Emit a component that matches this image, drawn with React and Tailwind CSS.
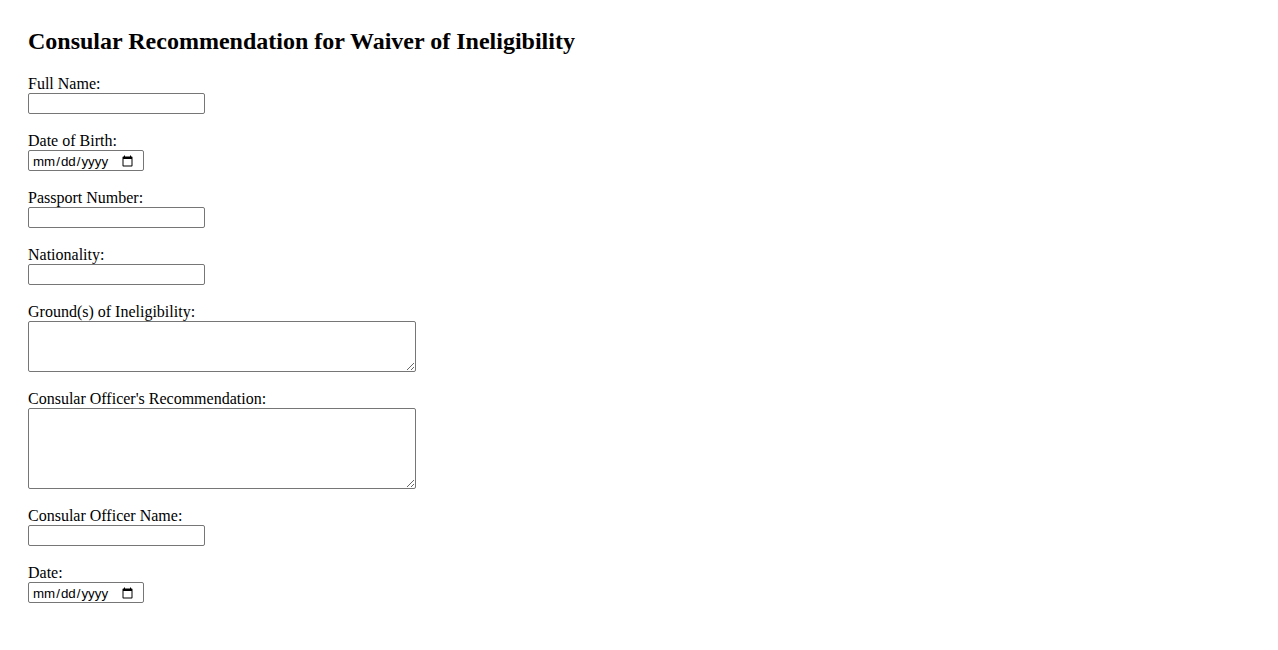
import React from 'react';

const inputCls =
  'block w-[177px] h-[21px] border border-[#767676] rounded-[2px] px-[2px] py-[1px] text-[13.33px] font-["Liberation_Sans",sans-serif] bg-white';
const dateCls =
  'block w-[116px] h-[21px] border border-[#767676] rounded-[2px] pl-[3px] pr-[7px] pt-[2px] pb-0 text-[13.33px] font-["Liberation_Sans",sans-serif] bg-white';
const areaCls =
  'block w-[388px] border border-[#767676] rounded-[2px] px-[2px] py-[1px] text-[13.33px] font-["Liberation_Mono",monospace] bg-white';

const Field = ({ label, children }) => (
  <div className="flex flex-col">
    <label className="block text-[16px] leading-[18px]">{label}</label>
    {children}
  </div>
);

const App = () => {
  return (
    <div className="min-h-[650px] bg-white p-[28px] font-['Liberation_Serif',serif] text-black">
      <h2 className="text-[24px] leading-[27px] font-bold mb-[20px]">
        Consular Recommendation for Waiver of Ineligibility
      </h2>
      <form className="flex flex-col gap-[18px]">
        <Field label="Full Name:">
          <input type="text" className={inputCls} />
        </Field>
        <Field label="Date of Birth:">
          <input type="date" className={dateCls} />
        </Field>
        <Field label="Passport Number:">
          <input type="text" className={inputCls} />
        </Field>
        <Field label="Nationality:">
          <input type="text" className={inputCls} />
        </Field>
        <Field label="Ground(s) of Ineligibility:">
          <textarea className={`${areaCls} h-[51px]`}></textarea>
        </Field>
        <Field label="Consular Officer's Recommendation:">
          <textarea className={`${areaCls} h-[81px]`}></textarea>
        </Field>
        <Field label="Consular Officer Name:">
          <input type="text" className={inputCls} />
        </Field>
        <Field label="Date:">
          <input type="date" className={dateCls} />
        </Field>
      </form>
    </div>
  );
};

export default App;
